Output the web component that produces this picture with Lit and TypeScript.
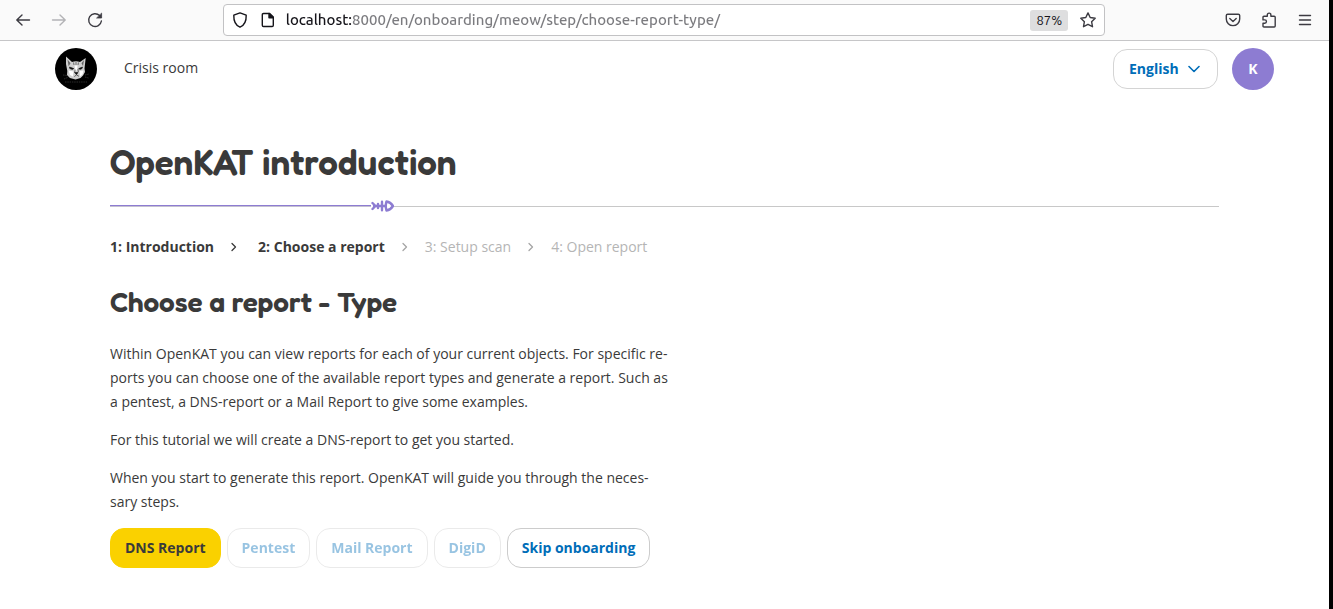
import { LitElement, html, css } from "lit";
import { customElement, property, state } from "lit/decorators.js";
import { classMap } from "lit/directives/class-map.js";

@customElement("browser-toolbar")
class BrowserToolbar extends LitElement {
  @property() address = "";

  static styles = css`
    :host {
      display: flex;
      align-items: center;
      height: 40px;
      padding: 0 16px 0 15px;
      background: #fafafa;
      border-bottom: 1px solid #c6c6c8;
    }
    button {
      display: block;
      padding: 0;
      border: 0;
      background: none;
      color: #3c3b42;
      line-height: 0;
    }
    button:disabled {
      color: #b3b3b6;
    }
    svg {
      display: block;
      width: 16px;
      height: 16px;
      fill: none;
      stroke: currentColor;
      stroke-width: 1.4;
      stroke-linecap: round;
      stroke-linejoin: round;
    }
    .group {
      display: flex;
      flex: 1 1 0;
      gap: 20px;
    }
    .end {
      justify-content: flex-end;
    }
    .address {
      display: flex;
      align-items: center;
      box-sizing: border-box;
      width: 68%;
      height: 32px;
      padding: 0 8px;
      gap: 12px;
      background: #fff;
      border: 1px solid #c2c2c4;
      border-radius: 4px;
      color: #15141a;
    }
    input {
      flex: 1;
      min-width: 0;
      height: 24px;
      margin-left: -2px;
      padding: 0;
      border: 0;
      outline: 0;
      font: 500 15px/24px Ubuntu, "Noto Sans", sans-serif;
      color: transparent;
      background: linear-gradient(90deg, #15141a 65px, #7b7b7f 65px);
      -webkit-background-clip: text;
      background-clip: text;
    }
    .zoom {
      width: 38px;
      height: 21px;
      border-radius: 3px;
      background: #dededf;
      color: #15141a;
      font: 400 13px/21px Ubuntu, "Noto Sans", sans-serif;
    }
  `;

  render() {
    return html`
      <div class="group">
        <button aria-label="Back"><svg viewBox="0 0 16 16"><path d="M14.5 8H2M7 3L1.8 8 7 13" /></svg></button>
        <button aria-label="Forward" disabled>
          <svg viewBox="0 0 16 16"><path d="M1.500 8H14M9 3l5.200 5L9 13" /></svg>
        </button>
        <button aria-label="Reload">
          <svg viewBox="0 0 16 16">
            <path d="M12.600 3.600A6.400 6.400 0 1 0 14.400 9" />
            <path d="M14.600 1.500V6H10z" fill="currentColor" stroke-width="0.8" />
          </svg>
        </button>
      </div>
      <div class="address">
        <svg viewBox="0 0 16 16">
          <path d="M8 .9l6.200 2.300c.2 5.600-1.400 9.900-6.200 12C3.200 13.100 1.600 8.800 1.800 3.200z" />
        </svg>
        <svg viewBox="0 0 16 16">
          <path d="M3.500 1.500h6.200l3.600 3.600v8.200a1.200 1.200 0 0 1-1.200 1.200H3.500a1.200 1.200 0 0 1-1.200-1.200V2.700a1.200 1.200 0 0 1 1.200-1.200z" />
          <path d="M9 1.500v4.200h4.300z" fill="currentColor" />
        </svg>
        <input type="text" aria-label="Address" spellcheck="false" .value=${this.address} />
        <button class="zoom">87%</button>
        <button aria-label="Bookmark">
          <svg viewBox="0 0 16 16">
            <path d="M8 .9l2.200 4.600 5 .7-3.600 3.500.9 5L8 12.300l-4.500 2.400.9-5L.8 6.200l5-.7z" />
          </svg>
        </button>
      </div>
      <div class="group end">
        <button aria-label="Pocket">
          <svg viewBox="0 0 16 16">
            <path d="M2.700 2.200h10.600c.8 0 1.400.6 1.400 1.400v3.300a6.700 6.700 0 0 1-13.400 0V3.600c0-.8.6-1.400 1.400-1.400zM4.800 6.500L8 9.500l3.200-3" />
          </svg>
        </button>
        <button aria-label="Extensions">
          <svg viewBox="0 0 16 16">
            <path d="M6.300 4.300V2.900a1.800 1.800 0 0 1 3.600 0v1.400h3.300c.6 0 1 .4 1 1v8.700c0 .6-.4 1-1 1H3c-.6 0-1-.4-1-1v-2.800h1.800a1.600 1.600 0 0 0 0-3.300H2V5.300c0-.6.4-1 1-1z" />
          </svg>
        </button>
        <button aria-label="Menu">
          <svg viewBox="0 0 16 16"><path d="M2.500 3.500h11M2.500 8h11M2.500 12.500h11" /></svg>
        </button>
      </div>
    `;
  }
}

@customElement("site-header")
class SiteHeader extends LitElement {
  static styles = css`
    :host {
      display: flex;
      align-items: center;
      padding: 7px 55px;
    }
    .logo {
      display: block;
      width: 42px;
      height: 42px;
    }
    .nav {
      flex: 1;
      margin-left: 27px;
      line-height: 24px;
      padding-bottom: 2px;
    }
    .nav a {
      color: #3a3a3a;
      text-decoration: none;
    }
    .language {
      display: grid;
      align-items: center;
      color: #006db8;
    }
    .language > * {
      grid-area: 1 / 1;
    }
    select {
      appearance: none;
      box-sizing: border-box;
      width: 105px;
      height: 40px;
      padding: 0 15px;
      border: 1px solid #d4d4d4;
      border-radius: 14px;
      background: #fff;
      color: inherit;
      font: inherit;
      font-weight: 700;
    }
    .chevron {
      justify-self: end;
      width: 12px;
      height: 12px;
      margin-right: 18px;
      fill: none;
      stroke: currentColor;
      stroke-width: 1.6;
      stroke-linecap: round;
      stroke-linejoin: round;
      pointer-events: none;
    }
    .avatar {
      width: 42px;
      height: 42px;
      margin-left: 14px;
      padding: 0;
      border: 0;
      border-radius: 50%;
      background: #8d7cd2;
      color: #fff;
      font: inherit;
      font-weight: 700;
    }
  `;

  render() {
    return html`
      <a href="#" aria-label="OpenKAT">
        <svg class="logo" viewBox="0 0 42 42">
          <circle cx="21" cy="21" r="21" />
          <path d="M11 8.500l6 5.500q4-1.300 8 0l5.700-4-1.200 10.500.5 3.500-2 3.500-2.500 2.500-5 1.500-5.500-1.500-3-3 .3-4-1.300-7z" fill="#cfcfcf" />
          <path d="M12.500 11.500l3 3.800-1.900 3zM29 12l-2.500 3.300 1.500 2.700z" fill="#666" />
          <path d="M18.500 14.500l.5 2.500M21 14v3M23.500 14.500l-.5 2.500" fill="none" stroke="#555" stroke-width=".8" />
          <path d="M14.500 19l4.300 1.600-1.500.8-2.500-.8zM27.500 19l-3.800 1.600 1.300.8 2-.8zM19.500 24.500h3.500l-1.500 2.200z" fill="#111" stroke="#111" stroke-width=".6" />
          <path d="M20.500 21l-1 3.500M23 21l.3 3M21.300 27l-2 1.600M21.500 27l2.500 1.300" fill="none" stroke="#333" stroke-width=".7" />
          <path d="M13.500 22.500l5 1-.5 5-3-1.500zM24.500 23l4-.5-1 4-2.500 2zM19.500 17.500h3l-.5 5h-1.500z" fill="#fff" />
          <path d="M8 27l4 .5M9 31l3.500-1.500M30 29l3.500 1M30 27l4-1M10 34h22" fill="none" stroke="#4a4a4a" stroke-width=".6" stroke-dasharray="1.500 .8" />
        </svg>
      </a>
      <nav class="nav"><a href="#">Crisis room</a></nav>
      <div class="language">
        <select aria-label="Language">
          <option>English</option>
        </select>
        <svg class="chevron" viewBox="0 0 12 12"><path d="M1 3.500l5 5 5-5" /></svg>
      </div>
      <button class="avatar">K</button>
    `;
  }
}

@customElement("step-progress")
class StepProgress extends LitElement {
  @property({ attribute: false }) steps: string[] = [];
  @property({ type: Number }) current = 0;

  static styles = css`
    :host {
      display: block;
    }
    .track {
      display: flex;
      align-items: center;
      height: 12px;
    }
    .done {
      flex: 0 0 261px;
      height: 1px;
      background: #8d7cd2;
      border-bottom: 1px solid #c4c0d0;
    }
    .rest {
      flex: 1;
      height: 1px;
      margin-top: 1px;
      background: #c8c8c8;
    }
    .fish {
      width: 23px;
      height: 12px;
      fill: none;
      stroke: #8d7cd2;
      stroke-width: 2.4;
      stroke-linecap: round;
      stroke-linejoin: round;
    }
    ol {
      display: flex;
      align-items: center;
      margin: 23px 0 0;
      padding: 0;
      list-style: none;
      line-height: 24px;
    }
    li {
      display: flex;
      align-items: center;
      color: #b5b5b5;
    }
    .reached {
      color: #3a3a3a;
      font-weight: 700;
    }
    a {
      color: inherit;
      text-decoration: none;
    }
    .arrow {
      width: 8px;
      height: 10px;
      margin: 0 16px;
      fill: none;
      stroke: #a5a5a5;
      stroke-width: 1.3;
      stroke-linecap: round;
      stroke-linejoin: round;
    }
    .passed .arrow {
      margin-right: 20px;
      stroke: #3a3a3a;
    }
  `;

  render() {
    return html`
      <div class="track">
        <span class="done"></span>
        <svg class="fish" viewBox="0 0 23 12">
          <path d="M1.500 3l3 3-3 3M3 6h11M7 4v4M11 1.800v8.400" />
          <path d="M15.500 1.500q4 .5 6.500 4.500-2.500 4-6.500 4.500-1.500-4.500 0-9z" />
        </svg>
        <span class="rest"></span>
      </div>
      <ol>
        ${this.steps.map(
          (step, i) => html`
            <li class=${classMap({ reached: i < this.current, passed: i < this.current - 1 })}>
              <a href="#">${i + 1}: ${step}</a>
              ${i < this.steps.length - 1
                ? html`<svg class="arrow" viewBox="0 0 8 10"><path d="M2 1.500L5.500 5 2 8.500" /></svg>`
                : ""}
            </li>
          `
        )}
      </ol>
    `;
  }
}

@customElement("app-root")
class AppRoot extends LitElement {
  @state() private steps = ["Introduction", "Choose a report", "Setup scan", "Open report"];
  @state() private reports = ["Pentest", "Mail Report", "DigiD"];

  static styles = css`
    :host {
      display: block;
      box-sizing: border-box;
      min-height: 100vh;
      border-right: 4px solid #000;
      background: #fff;
      color: #3a3a3a;
      font: 14px/24px "Open Sans", sans-serif;
    }
    main {
      padding: 41px 110px;
    }
    h1,
    h2 {
      margin: 0;
      font-family: Fredoka, Lato, sans-serif;
      font-weight: 600;
    }
    h1 {
      margin-bottom: 14px;
      font-size: 35px;
      line-height: 48px;
    }
    h2 {
      margin: 23px 0 20px;
      font-size: 28px;
      line-height: 40px;
    }
    .intro {
      max-width: 559px;
    }
    p {
      margin: 0 0 14px;
    }
    .actions {
      display: flex;
      flex-wrap: wrap;
      gap: 6px;
    }
    .actions button {
      height: 40px;
      padding: 0 14px;
      border: 1px solid #ccc;
      border-radius: 14px;
      background: #fff;
      color: #006db8;
      font: inherit;
      font-weight: 700;
    }
    .actions .primary {
      border-color: #fad100;
      background: #fad100;
      color: #3a3a3a;
    }
    .actions button:disabled {
      opacity: 0.4;
    }
  `;

  render() {
    return html`
      <browser-toolbar address="localhost:8000/en/onboarding/meow/step/choose-report-type/"></browser-toolbar>
      <site-header></site-header>
      <main>
        <h1>OpenKAT introduction</h1>
        <step-progress .steps=${this.steps} .current=${2}></step-progress>
        <h2>Choose a report - Type</h2>
        <div class="intro">
          <p>
            Within OpenKAT you can view reports for each of your current objects. For specific re&shy;ports you can
            choose one of the available report types and generate a report. Such as a pentest, a DNS-report or a Mail
            Report to give some examples.
          </p>
          <p>For this tutorial we will create a DNS-report to get you started.</p>
          <p>
            When you start to generate this report. OpenKAT will guide you through the neces&shy;sary steps.
          </p>
        </div>
        <div class="actions">
          <button class="primary">DNS Report</button>
          ${this.reports.map((name) => html`<button disabled>${name}</button>`)}
          <button>Skip onboarding</button>
        </div>
      </main>
    `;
  }
}
